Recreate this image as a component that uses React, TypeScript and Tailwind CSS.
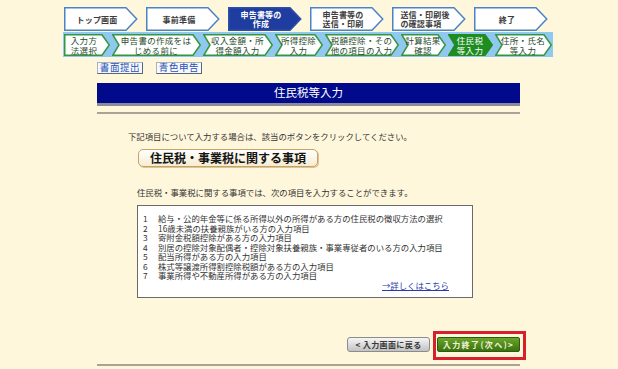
import type { ReactElement } from 'react';

// ============================================================================
// Data
// ============================================================================

interface MainStep {
  lines: string[];
  active?: boolean;
  left?: boolean;
}

const mainSteps: MainStep[] = [
  { lines: ['トップ画面'] },
  { lines: ['事前準備'] },
  { lines: ['申告書等の', '作成'], active: true },
  { lines: ['申告書等の', '送信・印刷'], left: true },
  { lines: ['送信・印刷後', 'の確認事項'], left: true },
  { lines: ['終了'] },
];

interface SubStep {
  lines: string[];
  width: number;
  active?: boolean;
}

const subSteps: SubStep[] = [
  { lines: ['入力方', '法選択'], width: 46 },
  { lines: ['申告書の作成をは', 'じめる前に'], width: 89 },
  { lines: ['収入金額・所', '得金額入力'], width: 70 },
  { lines: ['所得控除', '入力'], width: 48 },
  { lines: ['税額控除・その', '他の項目の入力'], width: 74 },
  { lines: ['計算結果', '確認'], width: 45 },
  { lines: ['住民税', '等入力'], width: 45, active: true },
  { lines: ['住所・氏名', '等入力'], width: 57 },
];

const items: string[] = [
  '給与・公的年金等に係る所得以外の所得がある方の住民税の徴収方法の選択',
  '16歳未満の扶養親族がいる方の入力項目',
  '寄附金税額控除がある方の入力項目',
  '別居の控除対象配偶者・控除対象扶養親族・事業専従者のいる方の入力項目',
  '配当所得がある方の入力項目',
  '株式等譲渡所得割控除税額がある方の入力項目',
  '事業所得や不動産所得がある方の入力項目',
];

// ============================================================================
// Step navigation
// ============================================================================

function MainStepItem({ step }: { step: MainStep }): ReactElement {
  return (
    <div className="relative h-[24px] w-[74px] shrink-0">
      <svg className="absolute inset-0" width="74" height="24" viewBox="0 0 74 24">
        <polygon
          points="0.75,0.75 62,0.75 72.75,12 62,23.25 0.75,23.25"
          fill={step.active ? '#1f3d9e' : '#ffffff'}
          stroke={step.active ? '#2c4fae' : '#4a84c8'}
          strokeWidth="1.5"
        />
      </svg>
      <div
        className={`relative flex h-full items-center justify-center pl-[3px] pr-[11px] text-[8px] font-bold leading-[9px] tracking-[0.2px] ${
          step.active ? 'text-white' : 'text-[#3c3c3c]'
        }`}
      >
        <div className={step.left ? 'text-left' : 'text-center'}>
          {step.lines.map((line) => (
            <div key={line}>{line}</div>
          ))}
        </div>
      </div>
    </div>
  );
}

function SubStepItem({ step, first }: { step: SubStep; first: boolean }): ReactElement {
  const w = step.width;
  const points = first
    ? `0.75,0.75 ${w - 8},0.75 ${w - 0.75},11 ${w - 8},21.25 0.75,21.25`
    : `0.75,0.75 ${w - 8},0.75 ${w - 0.75},11 ${w - 8},21.25 0.75,21.25 7,11`;
  return (
    <div className="relative h-[22px] shrink-0" style={{ width: w }}>
      <svg className="absolute inset-0" width={w} height="22" viewBox={`0 0 ${w} 22`}>
        <polygon
          points={points}
          fill={step.active ? '#1f8c22' : '#ffffff'}
          stroke={step.active ? '#1f8c22' : '#34973f'}
          strokeWidth="1.5"
        />
      </svg>
      <div
        className={`relative flex h-full items-center justify-center pr-[7px] text-center text-[8.5px] leading-[10px] tracking-[0.3px] ${
          first ? 'pl-[1px]' : 'pl-[6px]'
        } ${step.active ? 'text-white' : 'text-[#1f4a2c]'}`}
      >
        <div>
          {step.lines.map((line) => (
            <div key={line} className="whitespace-nowrap">
              {line}
            </div>
          ))}
        </div>
      </div>
    </div>
  );
}

function StepNav(): ReactElement {
  return (
    <div className="ml-[63px] pt-[7px]">
      <div className="ml-[1px] flex gap-[8px]">
        {mainSteps.map((step) => (
          <MainStepItem key={step.lines.join('')} step={step} />
        ))}
      </div>
      <div className="mt-[1px] flex h-[25px] w-[490px] items-center gap-[2px] bg-[#90c8f0] pl-[1px]">
        {subSteps.map((step, i) => (
          <SubStepItem key={step.lines.join('')} step={step} first={i === 0} />
        ))}
      </div>
    </div>
  );
}

// ============================================================================
// Component
// ============================================================================

function FormTab({ label }: { label: string }): ReactElement {
  return (
    <div className="flex h-[12px] w-[46px] items-center justify-center border border-[#a8b2c2] border-b-[#5a667c] border-r-[#5a667c] bg-[#f6f8fc] text-[9.5px] leading-none tracking-[0.6px] text-[#2a50b4]">
      {label}
    </div>
  );
}

export default function App(): ReactElement {
  return (
    <div className="min-h-[369px] w-full overflow-hidden bg-[#fff7dc] font-['Noto_Sans_CJK_JP',sans-serif]">
      <StepNav />

      <div className="ml-[97px] w-[423px]">
        <div className="mt-[5px] flex gap-[13px]">
          <FormTab label="書面提出" />
          <FormTab label="青色申告" />
        </div>

        <div className="mt-[9px] flex h-[20px] items-center justify-center bg-[#000a8a] text-[11.5px] leading-none text-white">
          住民税等入力
        </div>
        <div className="h-[3px] bg-[#8d8a9a]" />
        <div className="mt-[6px] h-[2px] bg-[#aaa496]" />

        <p className="mt-[17px] pl-[31px] text-[8.4px] leading-[10px] text-[#333333]">
          下記項目について入力する場合は、該当のボタンをクリックしてください。
        </p>

        <button
          type="button"
          className="ml-[41px] mt-[8px] flex h-[18px] w-[180px] items-center justify-center rounded-[5px] border border-[#c6a266] bg-linear-to-b from-white to-[#f6ecd0] text-[12px] font-bold leading-none text-[#141414] shadow-[1px_1px_0_#dcc494]"
        >
          住民税・事業税に関する事項
        </button>

        <p className="mt-[20px] pl-[40px] text-[8.4px] leading-[10px] text-[#333333]">
          住民税・事業税に関する事項では、次の項目を入力することができます。
        </p>

        <div className="ml-[40px] mt-[8px] w-[336px] border border-[#6a6a6a] bg-white pb-[7px] pl-[5px] pt-[8px] text-[8.4px] leading-[9.5px] text-[#333333]">
          {items.map((text, i) => (
            <div key={text} className="flex">
              <span className="w-[15px] shrink-0">{i + 1}</span>
              <span className="whitespace-nowrap">{text}</span>
            </div>
          ))}
          <div className="mr-[23px] flex justify-end">
            <a href="#" className="text-[#2a3aa8] underline">
              →詳しくはこちら
            </a>
          </div>
        </div>

        <div className="mt-[39px] flex justify-end gap-[7px]">
          <button
            type="button"
            className="flex h-[15px] w-[83px] items-center justify-center rounded-[3px] border border-[#8c8c8c] bg-linear-to-b from-[#f6f6f6] to-[#c2c2c2] text-[8px] font-bold leading-none tracking-[0.4px] text-[#3a3a3a]"
          >
            &lt; 入力画面に戻る
          </button>
          <div className="relative">
            <button
              type="button"
              className="flex h-[15px] w-[83px] items-center justify-center rounded-[2px] border border-[#2d5a0c] bg-linear-to-b from-[#6aa62a] to-[#3a7210] text-[8px] font-bold leading-none tracking-[1.4px] text-[#f2f2dc]"
            >
              入力終了(次へ)&gt;
            </button>
            <div className="pointer-events-none absolute -bottom-[8px] -left-[4px] -right-[6px] -top-[6px] border-[3px] border-[#d8202a]" />
          </div>
        </div>

        <div className="mt-[12px] h-[2px] bg-[#aaa496]" />
      </div>
    </div>
  );
}
